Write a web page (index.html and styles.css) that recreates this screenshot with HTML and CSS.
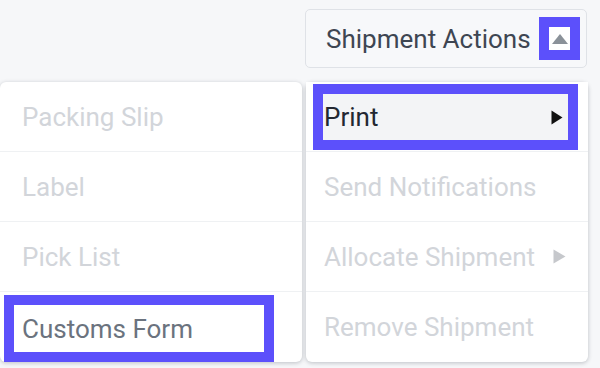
FILE: index.html
```html
<!DOCTYPE html>
<html>
<head>
<meta charset="utf-8">
<link rel="stylesheet" href="styles.css">
</head>
<body>
<div class="page">
  <div class="topbar">
    <div class="actions-btn">
      <span class="actions-label">Shipment Actions</span>
      <span class="hl hl-toggle">
        <svg width="18" height="12" viewBox="0 0 18 12"><polygon points="9,1 17,11 1,11" fill="#8a9199"/></svg>
      </span>
    </div>
  </div>
  <div class="menus">
    <div class="menu menu-left">
      <div class="item disabled">Packing Slip</div>
      <div class="item disabled">Label</div>
      <div class="item disabled">Pick List</div>
      <div class="item item-hl-left">
        <div class="hl hl-customs">Customs Form</div>
      </div>
    </div>
    <div class="menu menu-right">
      <div class="item item-hl-right">
        <div class="hl hl-print">
          <span>Print</span>
          <svg class="caret" width="12" height="15" viewBox="0 0 12 15"><polygon points="0.5,0.5 11.5,7.5 0.5,14.5" fill="#111"/></svg>
        </div>
      </div>
      <div class="item disabled">Send Notifications</div>
      <div class="item disabled with-caret">
        <span>Allocate Shipment</span>
        <svg class="caret" width="13" height="15" viewBox="0 0 13 15"><polygon points="0.5,0.5 12.5,7.5 0.5,14.5" fill="#c6c8cc"/></svg>
      </div>
      <div class="item disabled">Remove Shipment</div>
    </div>
  </div>
</div>
</body>
</html>
```

FILE: styles.css
```css
html, body {
  margin: 0;
  padding: 0;
}
body {
  width: 600px;
  height: 368px;
  overflow: hidden;
  background: #f6f7f9;
  font-family: Roboto, "Liberation Sans", sans-serif;
}
.page {
  display: flex;
  flex-direction: column;
  padding-top: 9px;
}
.topbar {
  display: flex;
  justify-content: flex-end;
  padding-right: 13px;
}
.actions-btn {
  box-sizing: border-box;
  width: 282px;
  height: 59px;
  border: 1px solid #dfe2e7;
  border-radius: 5px;
  background: #f7f8fa;
  display: flex;
  align-items: center;
  padding-left: 20px;
  padding-right: 6px;
}
.actions-label {
  font-size: 26px;
  color: #3e4652;
  flex: 1;
  white-space: nowrap;
}
.hl {
  box-sizing: border-box;
  border: 10px solid #5c50fb;
}
.hl-toggle {
  width: 41px;
  height: 43px;
  background: #fff;
  display: flex;
  align-items: center;
  justify-content: center;
  padding-top: 1px;
}
.menus {
  display: flex;
  margin-top: 14px;
  gap: 4px;
}
.menu {
  box-sizing: border-box;
  background: #fff;
  border-radius: 6px;
  box-shadow: 0 1px 4px rgba(40, 48, 60, 0.28);
  display: flex;
  flex-direction: column;
  height: 280px;
}
.menu-left {
  width: 302px;
}
.menu-right {
  width: 282px;
}
.item {
  box-sizing: border-box;
  height: 70px;
  display: flex;
  align-items: center;
  font-size: 26px;
  border-bottom: 1px solid #eff1f3;
  white-space: nowrap;
}
.item:last-child {
  border-bottom: none;
}
.menu-left .item {
  padding-left: 22px;
}
.menu-right .item {
  padding-left: 18px;
}
.disabled {
  color: #d2d5da;
}
.item-hl-left.item {
  padding: 3px 28px 0 4px;
  align-items: stretch;
}
.hl-customs {
  flex: 1;
  display: flex;
  align-items: center;
  padding-left: 8px;
  color: #6b737e;
  background: #fff;
}
.item-hl-right.item {
  padding: 2px 10px 1px 7px;
  align-items: stretch;
  background: #fff;
}
.hl-print {
  flex: 1;
  display: flex;
  align-items: center;
  justify-content: space-between;
  padding-left: 1px;
  padding-right: 5px;
  background: #f3f4f6;
  color: #222731;
}
.with-caret {
  justify-content: space-between;
  padding-right: 22px;
}
.caret {
  display: block;
}
```
